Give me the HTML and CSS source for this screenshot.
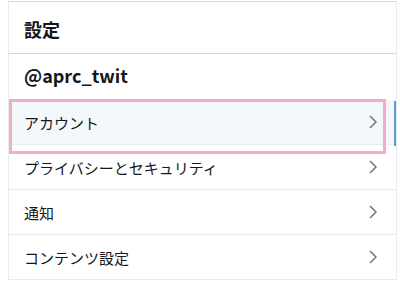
FILE: index.html
```html
<!DOCTYPE html>
<html lang="ja">
<head>
<meta charset="UTF-8">
<meta name="viewport" content="width=device-width, initial-scale=1.0">
<title>設定</title>
<link rel="stylesheet" href="styles.css">
</head>
<body>

<div class="panel">
    <div class="header">設定</div>
    <div class="user">@aprc_twit</div>

    <div class="menu">
        <div class="item active">
            <span>アカウント</span>
            <svg class="chevron" width="8" height="14" viewBox="0 0 8 14"><polyline points="1,1 7,7 1,13" /></svg>
        </div>
        <div class="item">
            <span>プライバシーとセキュリティ</span>
            <svg class="chevron" width="8" height="14" viewBox="0 0 8 14"><polyline points="1,1 7,7 1,13" /></svg>
        </div>
        <div class="item">
            <span>通知</span>
            <svg class="chevron" width="8" height="14" viewBox="0 0 8 14"><polyline points="1,1 7,7 1,13" /></svg>
        </div>
        <div class="item">
            <span>コンテンツ設定</span>
            <svg class="chevron" width="8" height="14" viewBox="0 0 8 14"><polyline points="1,1 7,7 1,13" /></svg>
        </div>
        <div class="highlight"></div>
        <div class="scroll-mark"></div>
    </div>
</div>

</body>
</html>
```

FILE: styles.css
```css
body {
    margin: 0;
    font-family: "Noto Sans CJK JP", "Noto Sans", sans-serif;
    color: #14171a;
    background: #fff;
}
.panel {
    box-sizing: border-box;
    width: 389px;
    margin: 1px 0 0 8px;
    border-top: 1px solid #d9d9d9;
    border-left: 1px solid #e6ecf0;
    border-right: 1px solid #e6ecf0;
}
.header {
    height: 52px;
    display: flex;
    align-items: center;
    padding: 2px 0 0 15px;
    box-sizing: border-box;
    font-size: 18px;
    font-weight: bold;
    border-bottom: 1px solid #d6d6d6;
}
.user {
    height: 46px;
    display: flex;
    align-items: center;
    padding: 0 0 4px 15px;
    box-sizing: border-box;
    font-size: 18px;
    font-weight: bold;
}
.menu {
    position: relative;
}
.item {
    height: 45px;
    box-sizing: border-box;
    display: flex;
    align-items: center;
    justify-content: space-between;
    padding: 0 19px 0 15px;
    font-size: 15px;
    border-bottom: 1px solid #e6ecf0;
}
.item.active {
    background-color: #f5f8fa;
}
.chevron polyline {
    fill: none;
    stroke: #657786;
    stroke-width: 1.5;
}
.highlight {
    position: absolute;
    top: -1px;
    left: 0;
    width: 377px;
    height: 55px;
    box-sizing: border-box;
    border: 3px solid #f3adc8;
}
.scroll-mark {
    position: absolute;
    top: 1px;
    right: 0;
    width: 2px;
    height: 45px;
    background-color: #5b9bd5;
}
```
